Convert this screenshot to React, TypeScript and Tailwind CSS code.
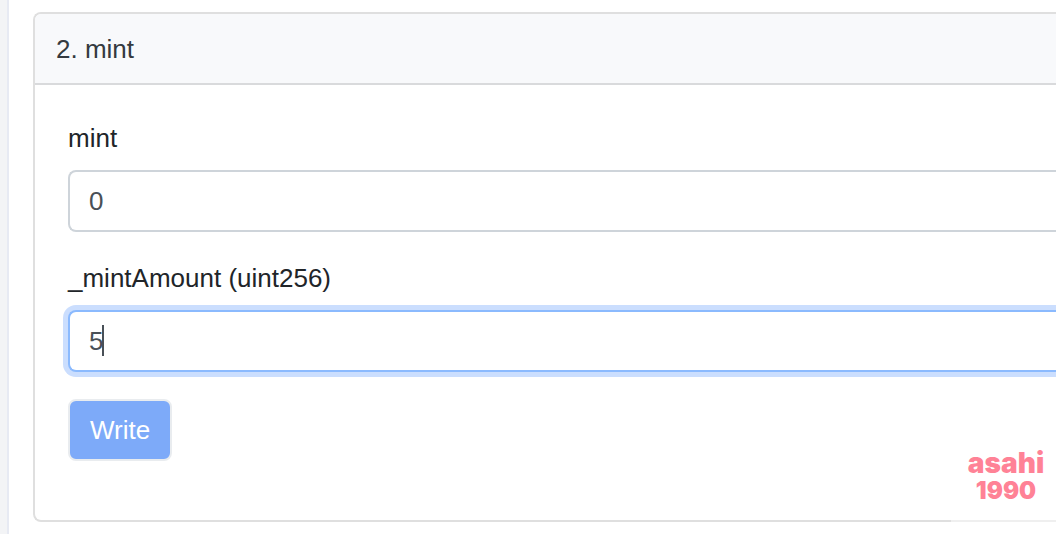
import React, { useState } from "react";

function Watermark() {
  return (
    <div className="pointer-events-none absolute right-0 bottom-0 flex h-24 w-[105px] flex-col items-center bg-white/50 pt-[11px] pl-[5px] font-['Inter',sans-serif] font-black text-[#ff8296]">
      <span className="text-[28px] leading-7">asahi</span>
      <span className="text-2xl leading-7">1990</span>
    </div>
  );
}

function App() {
  const [payable, setPayable] = useState("0");
  const [amount, setAmount] = useState("5");

  return (
    <div className="relative min-h-screen overflow-hidden bg-[#f3f4f6] pl-[7px] font-['Liberation_Sans',Arial,sans-serif] text-[26px] text-[#212529]">
      <div className="min-h-screen border-l-2 border-[#e7eaf3] bg-white py-3 pl-6">
        <div className="rounded-l-lg border-2 border-r-0 border-[#dfdfdf]">
          <div className="rounded-tl-md border-b-2 border-[#d9dadc] bg-[#f8f9fb] px-[21px] pt-4 pb-3.5 leading-[39px] text-[#343a40]">
            2. mint
          </div>
          <form
            className="flex flex-col items-start gap-[27px] pt-[34px] pb-[59px] pl-[33px]"
            onSubmit={(e) => e.preventDefault()}
          >
            <div className="w-full">
              <label htmlFor="payable" className="mb-3 block leading-[39px]">
                mint
              </label>
              <input
                id="payable"
                type="text"
                value={payable}
                onChange={(e) => setPayable(e.target.value)}
                className="block h-[62px] w-full rounded-l-lg border-2 border-r-0 border-[#ced4da] bg-white px-[19px] text-[#495057] outline-none"
              />
            </div>
            <div className="w-full">
              <label htmlFor="mintAmount" className="mb-3 block leading-[39px]">
                _mintAmount (uint256)
              </label>
              <div className="relative">
                <input
                  id="mintAmount"
                  type="text"
                  value={amount}
                  onChange={(e) => setAmount(e.target.value)}
                  className="block h-[62px] w-full rounded-l-lg border-2 border-r-0 border-[#8bbafe] bg-white px-[19px] text-[#495057] caret-transparent shadow-[0_0_0_5px_#cbdefe] outline-none"
                />
                {/* text cursor */}
                <span className="absolute top-[15px] left-[34px] h-[31px] w-0.5 bg-[#495057]"></span>
              </div>
            </div>
            <button
              type="submit"
              className="h-[62px] rounded-lg border-2 border-[#e9ecef] bg-[#7daaf9] px-5 text-white"
            >
              Write
            </button>
          </form>
        </div>
      </div>
      <Watermark />
    </div>
  );
}

export default App;
